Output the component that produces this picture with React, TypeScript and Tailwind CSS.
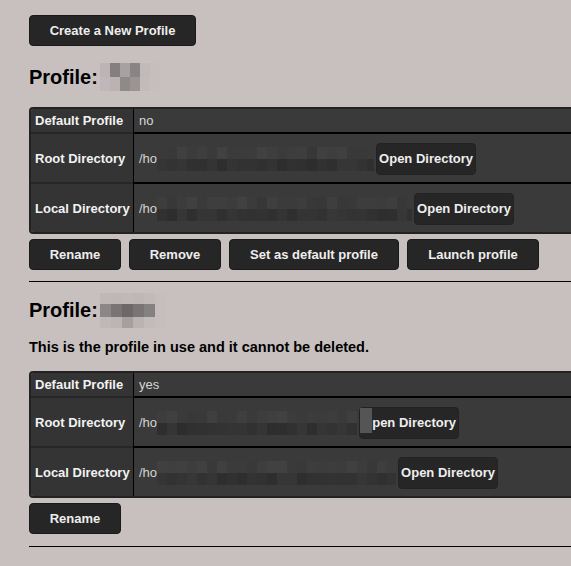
import React from "react";

function rnd(seed: number) {
  let s = seed;
  return () => {
    s = (s * 9301 + 49297) % 233280;
    return s / 233280;
  };
}

function Blur({ w, seed, h = 24, cell = 10 }: { w: number; seed: number; h?: number; cell?: number }) {
  const r = rnd(seed);
  const cols = Math.ceil(w / cell);
  const rows = [0, 1];
  return (
    <div className="flex flex-col shrink-0 overflow-hidden" style={{ width: w, height: h }}>
      {rows.map((ri) => (
        <div key={ri} className="flex flex-1">
          {Array.from({ length: cols }).map((_, ci) => {
            const base = ri === 0 ? 60 : 50;
            const v = Math.round(base + (r() - 0.5) * 10);
            return (
              <div
                key={ci}
                className="shrink-0 h-full"
                style={{ width: cell, background: `rgb(${v},${v},${v})` }}
              />
            );
          })}
        </div>
      ))}
    </div>
  );
}

function Grid({ rows, cw, rh }: { rows: string[][]; cw: number; rh: number[] }) {
  return (
    <div className="flex flex-col">
      {rows.map((r, i) => (
        <div key={i} className="flex">
          {r.map((c, j) => (
            <div key={j} style={{ width: cw, height: rh[i], background: c }} />
          ))}
        </div>
      ))}
    </div>
  );
}

function Btn({ w, children }: { w: number; children: React.ReactNode }) {
  return (
    <button
      className="h-[31px] bg-[#262626] border border-[#1a1a1a] rounded-[4px] text-[#eeeeee] font-bold text-[13px] shrink-0"
      style={{ width: w }}
    >
      {children}
    </button>
  );
}

function OpenBtn() {
  return (
    <button className="h-[32px] px-[2px] bg-[#262626] border border-[#222] rounded-[4px] text-[#eeeeee] font-bold text-[13px] shrink-0 whitespace-nowrap">
      Open Directory
    </button>
  );
}

function Row({
  label,
  h,
  last,
  children,
}: {
  label: string;
  h: string;
  last?: boolean;
  children: React.ReactNode;
}) {
  return (
    <div className={`flex ${h}`}>
      <div
        className={`w-[102px] shrink-0 bg-[#343434] flex items-center pl-[4px] pt-[1px] text-[13px] font-bold text-[#f2f2f2] ${
          last ? "" : "border-b-2 border-[#262626]"
        }`}
      >
        {label}
      </div>
      <div
        className={`flex-1 bg-[#3a3a3a] border-l border-black flex items-center pl-[5px] pt-[1px] text-[13px] text-[#d6d6d6] ${
          last ? "" : "border-b-2 border-black"
        }`}
      >
        {children}
      </div>
    </div>
  );
}

function Table({
  def,
  rootBlur,
  localBlur,
  seed,
  overlay,
}: {
  def: string;
  rootBlur: number;
  localBlur: number;
  seed: number;
  overlay?: boolean;
}) {
  return (
    <div className="w-[600px] border-t-2 border-l-2 border-b-2 border-[#222] rounded-tl-[4px] rounded-bl-[4px] overflow-hidden">
      <Row label="Default Profile" h="h-[25px]">
        {def}
      </Row>
      <Row label="Root Directory" h="h-[50px]">
        <span className="whitespace-nowrap">/ho</span>
        <Blur w={rootBlur} seed={seed} />
        <div className="relative ml-[2px]">
          <OpenBtn />
          {overlay && <div className="absolute left-[1px] top-[1px] w-[12px] h-[25px] bg-[#555]" />}
        </div>
      </Row>
      <Row label="Local Directory" h="h-[48px]" last>
        <span className="whitespace-nowrap">/ho</span>
        <Blur w={localBlur} seed={seed + 7} />
        <div className="ml-[2px]">
          <OpenBtn />
        </div>
      </Row>
    </div>
  );
}

export default function App() {
  return (
    <div className="min-h-screen w-full overflow-hidden bg-[#c8c0bf] font-['Liberation_Sans',Arial,sans-serif] text-black">
      <div className="w-[640px] pl-[29px] pt-[15px] pb-[20px]">
        <Btn w={167}>Create a New Profile</Btn>

        <div className="mt-[17px] h-[28px] flex items-center">
          <span className="text-[20px] font-bold leading-[28px]">Profile:</span>
          <div className="ml-[2px]">
            <Grid
              cw={10}
              rh={[14, 14]}
              rows={[
                ["#bdb5b5", "#858080", "#a8a1a1", "#8a8585", "#c2baba", "#c6bebd"],
                ["#c0b8b8", "#bbb3b3", "#8f8a8a", "#9a9494", "#c3bbbb", "#c6bebd"],
              ]}
            />
          </div>
        </div>

        <div className="mt-[16px]">
          <Table def="no" rootBlur={217} localBlur={255} seed={3} />
        </div>

        <div className="mt-[5px] flex gap-[8px]">
          <Btn w={92}>Rename</Btn>
          <Btn w={92}>Remove</Btn>
          <Btn w={170}>Set as default profile</Btn>
          <Btn w={132}>Launch profile</Btn>
        </div>

        <div className="mt-[11px] h-px bg-black w-[620px]" />

        <div className="mt-[14px] h-[28px] flex items-center">
          <span className="text-[20px] font-bold leading-[28px]">Profile:</span>
          <div className="ml-[2px]">
            <Grid
              cw={11}
              rh={[11, 13, 11]}
              rows={[
                ["#c0b8b8", "#bfb7b7", "#c1b9b9", "#bfb7b7", "#c2baba", "#c6bebd"],
                ["#8c8787", "#7a7575", "#6d6969", "#7a7575", "#868181", "#c6bebd"],
                ["#c0b8b8", "#bdb5b5", "#a59f9f", "#bbb3b3", "#c3bbbb", "#c6bebd"],
              ]}
            />
          </div>
        </div>

        <p className="mt-[14px] text-[14.5px] font-bold leading-[18px]">
          This is the profile in use and it cannot be deleted.
        </p>

        <div className="mt-[15px]">
          <Table def="yes" rootBlur={200} localBlur={239} seed={11} overlay />
        </div>

        <div className="mt-[5px] flex gap-[8px]">
          <Btn w={92}>Rename</Btn>
        </div>

        <div className="mt-[12px] h-px bg-black w-[620px]" />
      </div>
    </div>
  );
}
